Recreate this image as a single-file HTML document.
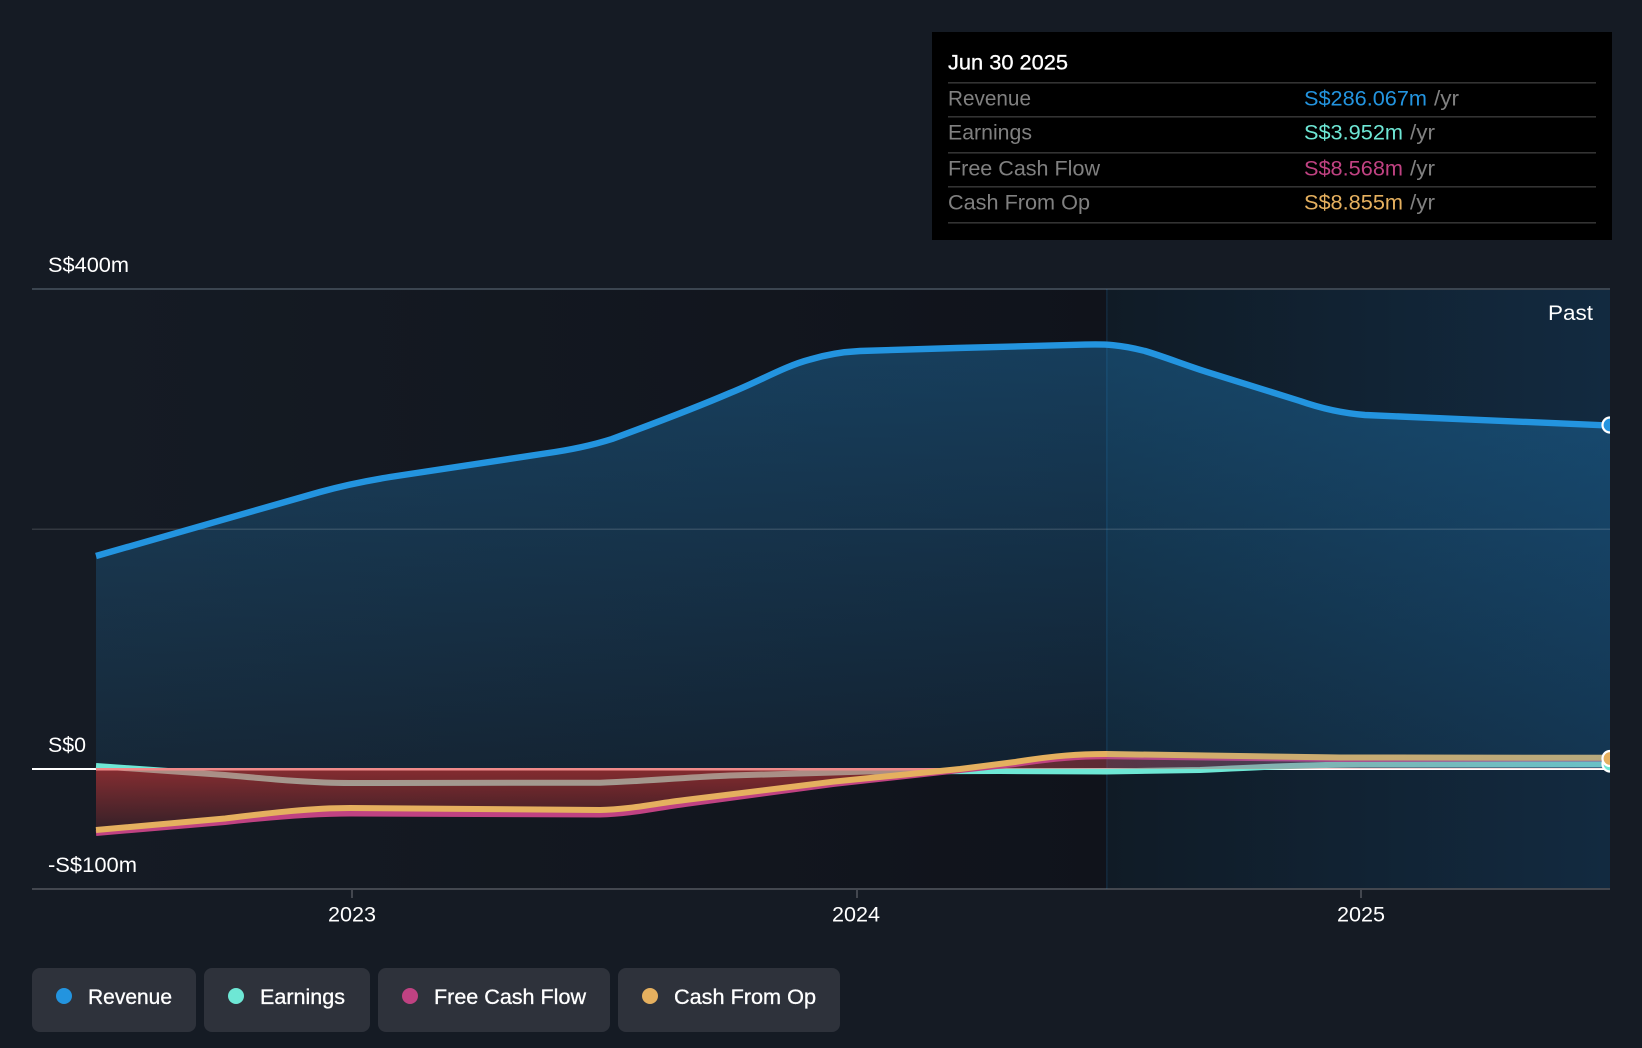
<!DOCTYPE html>
<html><head><meta charset="utf-8"><style>
html,body{margin:0;padding:0;background:#151b24}
svg{display:block;font-family:"Liberation Sans",sans-serif}
</style></head><body>
<svg width="1642" height="1048" viewBox="0 0 1642 1048" xmlns="http://www.w3.org/2000/svg">
<defs>
<linearGradient id="lb" x1="0" x2="1" y1="0" y2="0"><stop offset="0" stop-color="#151b24"/><stop offset="1" stop-color="#10131b"/></linearGradient>
<linearGradient id="pb" x1="0" x2="1" y1="0" y2="0"><stop offset="0" stop-color="#101b26"/><stop offset="1" stop-color="#122a40"/></linearGradient>
<linearGradient id="ra" gradientUnits="userSpaceOnUse" x1="0" x2="0" y1="344" y2="769"><stop offset="0" stop-color="#2394df" stop-opacity=".33"/><stop offset="1" stop-color="#2394df" stop-opacity=".105"/></linearGradient>
<linearGradient id="rd" gradientUnits="userSpaceOnUse" x1="0" x2="0" y1="769" y2="835"><stop offset="0" stop-color="#e23c3c" stop-opacity=".55"/><stop offset="1" stop-color="#e23c3c" stop-opacity=".12"/></linearGradient>
<linearGradient id="rp" gradientUnits="userSpaceOnUse" x1="965" x2="1610" y1="0" y2="0"><stop offset="0" stop-color="#e23c3c" stop-opacity=".42"/><stop offset="1" stop-color="#e23c3c" stop-opacity=".14"/></linearGradient>
<linearGradient id="ov" gradientUnits="userSpaceOnUse" x1="1107" x2="1610" y1="0" y2="0"><stop offset="0" stop-color="#2394df" stop-opacity=".06"/><stop offset="1" stop-color="#2394df" stop-opacity=".24"/></linearGradient>
<clipPath id="cp"><rect x="32" y="280" width="1578" height="620"/></clipPath>
</defs>
<rect width="1642" height="1048" fill="#151b24"/>
<rect x="96" y="289" width="1011" height="600" fill="url(#lb)"/>
<rect x="1107" y="289" width="503" height="600" fill="url(#pb)"/>
<path d="M96 556L320 492C345 485 365 481 390 477L545 453.5C570 450 590 446 612 439C650 425 695 408 730 393C760 381 785 366 810 359.5C825 355 840 352 860 351L957 348L1085 344.6C1105 344 1120 344.5 1145 351C1165 357 1185 365 1207 372L1300 401C1320 408 1340 413 1365 415L1610 425.5V769H96Z" fill="url(#ra)"/>
<rect x="32" y="288" width="1578" height="2" fill="#3b4550"/>
<rect x="32" y="528.5" width="1578" height="1.5" fill="#ffffff" fill-opacity=".13"/>
<rect x="32" y="888" width="1578" height="2" fill="#43474f"/>
<rect x="1106" y="289" width="1.5" height="600" fill="#2394df" fill-opacity=".16"/>
<rect x="351" y="889" width="2" height="9" fill="#43474f"/>
<rect x="856" y="889" width="2" height="9" fill="#43474f"/>
<rect x="1360" y="889" width="2" height="9" fill="#43474f"/>
<rect x="32" y="768" width="1578" height="2" fill="#ffffff"/>
<g clip-path="url(#cp)" fill="none" stroke-linejoin="round">
<path d="M96 766L225 775C280 780 315 783 350 783L600 782.7C650 781 690 777 730 775.5L867 771.5L1000 771L1106 771.5L1200 770C1250 767.5 1300 765 1360 764.5L1620 764.3" stroke="#6ee7d5" stroke-width="6"/>
<path d="M96 833L225 822C270 817 310 813.5 350 813.5L600 814.5C630 814 655 808 685 804L833 784L965 769H96Z" fill="url(#rd)" stroke="none"/>
<path d="M965 769L1015 764C1055 758 1080 756.3 1106 756.3L1340 759L1620 758.3V769Z" fill="url(#rp)" stroke="none"/>
<rect x="96" y="768" width="869" height="2.5" fill="#f08a8a" stroke="none"/>
<path d="M96 833L225 822C270 817 310 813.5 350 813.5L600 814.5C630 814 655 808 685 804L833 784L960 770L1015 764C1055 758 1080 756.3 1106 756.3L1340 759L1620 758.3" stroke="#c04282" stroke-width="6"/>
<path d="M96 830L225 818.5C270 813 310 808 350 808L600 810C630 809.5 655 803.5 685 800L833 781.7L960 769L1015 762C1055 755.5 1080 754 1106 754L1340 757.5L1620 757.8" stroke="#e5b05f" stroke-width="6"/>
<path d="M96 556L320 492C345 485 365 481 390 477L545 453.5C570 450 590 446 612 439C650 425 695 408 730 393C760 381 785 366 810 359.5C825 355 840 352 860 351L957 348L1085 344.6C1105 344 1120 344.5 1145 351C1165 357 1185 365 1207 372L1300 401C1320 408 1340 413 1365 415L1620 426" stroke="#2394df" stroke-width="6.4"/>
<path d="M1107 751L1340 754.5L1610 754.8V768H1107Z" fill="url(#ov)" stroke="none"/>
<circle cx="1610" cy="425" r="7.5" fill="#2394df" stroke="#fff" stroke-width="2.2"/>
<circle cx="1610" cy="764" r="7.5" fill="#6ee7d5" stroke="#fff" stroke-width="2.2"/>
<circle cx="1610" cy="758.5" r="7.5" fill="#e5b05f" stroke="#fff" stroke-width="2.2"/>
</g>
<g fill="#fff" font-size="21">
<text x="48" y="272" textLength="81" lengthAdjust="spacingAndGlyphs">S$400m</text>
<text x="48" y="752" textLength="38" lengthAdjust="spacingAndGlyphs">S$0</text>
<text x="48" y="872" textLength="89" lengthAdjust="spacingAndGlyphs">-S$100m</text>
<text x="1548" y="320" textLength="45" lengthAdjust="spacingAndGlyphs">Past</text>
<text x="328" y="921.5" textLength="48" lengthAdjust="spacingAndGlyphs">2023</text>
<text x="832" y="921.5" textLength="48" lengthAdjust="spacingAndGlyphs">2024</text>
<text x="1337" y="921.5" textLength="48" lengthAdjust="spacingAndGlyphs">2025</text>
</g>
<rect x="932" y="32" width="680" height="208" fill="#000"/>
<g fill="#333">
<rect x="948" y="82" width="648" height="1.6"/><rect x="948" y="116" width="648" height="1.6"/><rect x="948" y="152" width="648" height="1.6"/><rect x="948" y="186" width="648" height="1.6"/><rect x="948" y="222" width="648" height="1.6"/>
</g>
<g font-size="21">
<text x="948" y="69.5" fill="#fff" stroke="#fff" stroke-width=".3" textLength="120" lengthAdjust="spacingAndGlyphs">Jun 30 2025</text>
<g fill="#808080">
<text x="948" y="105.5" textLength="83" lengthAdjust="spacingAndGlyphs">Revenue</text>
<text x="948" y="139.5" textLength="84" lengthAdjust="spacingAndGlyphs">Earnings</text>
<text x="948" y="175.5" textLength="152" lengthAdjust="spacingAndGlyphs">Free Cash Flow</text>
<text x="948" y="209.5" textLength="142" lengthAdjust="spacingAndGlyphs">Cash From Op</text>
<text x="1434" y="105.5" textLength="25" lengthAdjust="spacingAndGlyphs">/yr</text>
<text x="1410" y="139.5" textLength="25" lengthAdjust="spacingAndGlyphs">/yr</text>
<text x="1410" y="175.5" textLength="25" lengthAdjust="spacingAndGlyphs">/yr</text>
<text x="1410" y="209.5" textLength="25" lengthAdjust="spacingAndGlyphs">/yr</text>
</g>
<text x="1304" y="105.5" fill="#2394df" textLength="123" lengthAdjust="spacingAndGlyphs">S$286.067m</text>
<text x="1304" y="139.5" fill="#6ee7d5" textLength="99" lengthAdjust="spacingAndGlyphs">S$3.952m</text>
<text x="1304" y="175.5" fill="#c04282" textLength="99" lengthAdjust="spacingAndGlyphs">S$8.568m</text>
<text x="1304" y="209.5" fill="#e5b05f" textLength="99" lengthAdjust="spacingAndGlyphs">S$8.855m</text>
</g>
<g fill="#2e323b">
<rect x="32" y="968" width="164" height="64" rx="8"/><rect x="204" y="968" width="166" height="64" rx="8"/><rect x="378" y="968" width="232" height="64" rx="8"/><rect x="618" y="968" width="222" height="64" rx="8"/>
</g>
<circle cx="64" cy="996" r="8" fill="#2394df"/><circle cx="236" cy="996" r="8" fill="#6ee7d5"/><circle cx="410" cy="996" r="8" fill="#c04282"/><circle cx="650" cy="996" r="8" fill="#e5b05f"/>
<g fill="#fff" stroke="#fff" stroke-width=".3" font-size="21">
<text x="88" y="1004" textLength="84" lengthAdjust="spacingAndGlyphs">Revenue</text>
<text x="260" y="1004" textLength="85" lengthAdjust="spacingAndGlyphs">Earnings</text>
<text x="434" y="1004" textLength="152" lengthAdjust="spacingAndGlyphs">Free Cash Flow</text>
<text x="674" y="1004" textLength="142" lengthAdjust="spacingAndGlyphs">Cash From Op</text>
</g>
</svg>
</body></html>
